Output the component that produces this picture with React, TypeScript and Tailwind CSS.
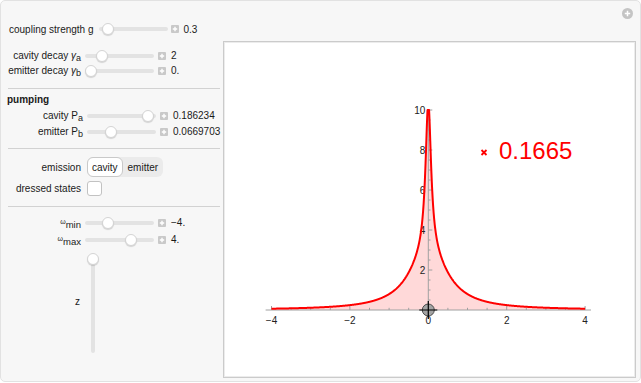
import React from 'react';

const FONT = { fontFamily: '"Liberation Sans", Arial, sans-serif' };

function Slider({ pos, w = 69 }: { pos: number; w?: number }) {
  return (
    <div className="relative h-[14px] shrink-0" style={{ width: w }}>
      <div className="absolute left-0 right-0 top-[5px] h-[4px] rounded-full bg-[#e3e3e3]" />
      <div
        className="absolute top-[1px] h-[12px] w-[12px] rounded-full border border-[#d4d4d4] bg-white shadow-[0_1px_1px_rgba(0,0,0,0.15)]"
        style={{ left: pos - 6 }}
      />
    </div>
  );
}

function PlusBox() {
  return (
    <svg width="8" height="8" viewBox="0 0 8 8" className="shrink-0">
      <rect x="0" y="0" width="8" height="8" rx="1" fill="#c9c9c9" />
      <path d="M4 1.8v4.4M1.8 4h4.4" stroke="#fff" strokeWidth="1.4" />
    </svg>
  );
}

function SliderRow({ label, labelW, pos, value }: { label: React.ReactNode; labelW: number; pos: number; value: string }) {
  return (
    <div className="flex h-[15px] items-center">
      <div className="shrink-0 pr-[4px] text-right whitespace-nowrap" style={{ width: labelW }}>
        {label}
      </div>
      <Slider pos={pos} />
      <div className="ml-[4px]">
        <PlusBox />
      </div>
      <span className="ml-[5px] whitespace-nowrap">{value}</span>
    </div>
  );
}

function Sep() {
  return <div className="ml-[7px] mr-[3px] h-px bg-[#d2d2d2]" />;
}

function Sub({ base, sub, italic }: { base: string; sub: string; italic?: boolean }) {
  return (
    <span>
      <span className={italic ? 'italic' : ''}>{base}</span>
      <span className="relative top-[2px] text-[9px]">{sub}</span>
    </span>
  );
}

function Omega({ sub }: { sub: string }) {
  return (
    <span>
      <span className="relative top-[-2px] text-[7px]">ω</span>
      <span className="relative top-[2px] text-[9.5px]">{sub}</span>
    </span>
  );
}

const X = (u: number) => 204.3 + 39.2 * u;
const Y = (v: number) => 268 - 20 * v;
const f = (x: number) => Math.min(10, 1.0 / (x * x + 0.35) + 0.0557 / (x * x + 0.0074));

function Plot() {
  const pts: string[] = [];
  for (let i = 0; i <= 1600; i++) {
    const x = -4 + i * 0.005;
    pts.push(`${X(x).toFixed(2)},${Y(f(x)).toFixed(2)}`);
  }
  const line = 'M' + pts.join('L');
  const area = `M${X(-4)},${Y(0)}L` + pts.join('L') + `L${X(4)},${Y(0)}Z`;

  const xt: number[] = [];
  for (let k = -8; k <= 8; k++) xt.push(k * 0.5);
  const yt: number[] = [];
  for (let k = 1; k <= 20; k++) yt.push(k * 0.5);

  return (
    <svg width="411" height="334" viewBox="0 0 411 334" style={FONT}>
      <path d={area} fill="#ffd9d9" />
      {/* axes */}
      <line x1={X(-4.15)} y1={Y(0)} x2={X(4.15)} y2={Y(0)} stroke="#a0a0a0" strokeWidth="1" />
      <line x1={X(0)} y1={Y(0)} x2={X(0)} y2={Y(10)} stroke="#a0a0a0" strokeWidth="1" />
      {xt.map((t) => {
        const major = Math.abs(t % 2) < 1e-6;
        return (
          <line key={'x' + t} x1={X(t)} y1={Y(0)} x2={X(t)} y2={Y(0) - (major ? 4 : 2.2)} stroke="#a0a0a0" strokeWidth="1" />
        );
      })}
      {yt.map((t) => {
        const major = Math.abs(t % 2) < 1e-6;
        return (
          <line key={'y' + t} x1={X(0)} y1={Y(t)} x2={X(0) + (major ? 4 : 2.2)} y2={Y(t)} stroke="#a0a0a0" strokeWidth="1" />
        );
      })}
      {[-4, -2, 0, 2, 4].map((t) => (
        <text key={'xl' + t} x={X(t)} y={Y(0) + 14} fontSize="10" textAnchor="middle" fill="#222">
          {t < 0 ? '−' + Math.abs(t) : t}
        </text>
      ))}
      {[2, 4, 6, 8, 10].map((t) => (
        <text key={'yl' + t} x={X(0) - 3} y={Y(t) + 3.5} fontSize="10" textAnchor="end" fill="#222">
          {t}
        </text>
      ))}
      <path d={line} fill="none" stroke="#ff0000" strokeWidth="2" strokeLinejoin="round" />
      {/* locator */}
      <g transform={`translate(${X(0)},${Y(0)})`}>
        <circle r="6" fill="#a3a3a3" stroke="#4a4a4a" strokeWidth="1" />
        <path d="M-9 0H9M0 -9V9" stroke="#000" strokeWidth="1.2" />
      </g>
      {/* value */}
      <path d="M257.5 108l5 5M262.5 108l-5 5" stroke="#ff0000" strokeWidth="1.8" />
      <text x="275" y="117" fontSize="24" fill="#ff0000">
        0.1665
      </text>
    </svg>
  );
}

export default function App() {
  return (
    <div className="h-[383px] w-[641px] bg-white text-[10px] text-[#1a1a1a]" style={FONT}>
      <div className="relative flex h-[382px] w-[641px] rounded-[5px] border border-[#e2e2e2] bg-[#f7f7f7]">
        {/* top-right icon */}
        <svg className="absolute right-[7px] top-[7px]" width="11" height="11" viewBox="0 0 11 11">
          <circle cx="5.5" cy="5.5" r="5.5" fill="#c4c4c4" />
          <path d="M5.5 2.8v5.4M2.8 5.5h5.4" stroke="#fff" strokeWidth="1.5" />
        </svg>

        {/* controls */}
        <div className="flex w-[222px] shrink-0 flex-col pt-[20px]">
          <div className="flex h-[16px] items-center pl-[8px]">
            <span className="whitespace-nowrap">coupling strength g</span>
            <div className="ml-[5px]">
              <Slider pos={9} />
            </div>
            <div className="ml-[3px]">
              <PlusBox />
            </div>
            <span className="ml-[5px]">0.3</span>
          </div>

          <div className="mt-[11px]">
            <SliderRow labelW={84} pos={17} value="2" label={<>cavity decay <Sub base="γ" sub="a" italic /></>} />
            <SliderRow labelW={84} pos={6} value="0." label={<>emitter decay <Sub base="γ" sub="b" italic /></>} />
          </div>

          <div className="mt-[10px]">
            <Sep />
          </div>

          <div className="mt-[4px] pl-[6px] font-bold leading-[14px]">pumping</div>
          <div className="mt-[1px] flex flex-col gap-[1px]">
            <SliderRow labelW={86} pos={61} value="0.186234" label={<>cavity <Sub base="P" sub="a" /></>} />
            <SliderRow labelW={86} pos={24} value="0.0669703" label={<>emitter <Sub base="P" sub="b" /></>} />
          </div>

          <div className="mt-[9px]">
            <Sep />
          </div>

          <div className="mt-[8px] flex h-[20px] items-center">
            <div className="w-[86px] shrink-0 pr-[6px] text-right">emission</div>
            <div className="flex h-[20px] items-center rounded-[6px] bg-[#ebebeb]">
              <div className="flex h-[20px] items-center rounded-[6px] border border-[#c9c9c9] bg-white px-[4px]">cavity</div>
              <div className="px-[5px]">emitter</div>
            </div>
          </div>
          <div className="mt-[3px] flex h-[16px] items-center">
            <div className="w-[86px] shrink-0 pr-[6px] text-right">dressed states</div>
            <div className="h-[15px] w-[15px] rounded-[3px] border border-[#c2c2c2] bg-white" />
          </div>

          <div className="mt-[10px]">
            <Sep />
          </div>

          <div className="mt-[8px] flex flex-col gap-[2px]">
            <SliderRow labelW={84} pos={23} value="−4." label={<Omega sub="min" />} />
            <SliderRow labelW={84} pos={46} value="4." label={<Omega sub="max" />} />
          </div>

          <div className="mt-[6px] flex h-[100px]">
            <div className="flex w-[84px] items-center justify-end pr-[4px]">
              <span className="mt-[-4px] pr-[1px]">z</span>
            </div>
            <div className="relative h-[100px] w-[16px]">
              <div className="absolute bottom-[0px] left-[6px] top-[4px] w-[4px] rounded-full bg-[#e3e3e3]" />
              <div className="absolute left-[2px] top-[0px] h-[12px] w-[12px] rounded-full border border-[#d4d4d4] bg-white shadow-[0_1px_1px_rgba(0,0,0,0.15)]" />
            </div>
          </div>
        </div>

        {/* plot panel */}
        <div className="mt-[40px] h-[337px] w-[413px] border border-[#cbcbcb] bg-white shadow-[inset_0_0_0_1px_#ececec]">
          <Plot />
        </div>
      </div>
    </div>
  );
}
